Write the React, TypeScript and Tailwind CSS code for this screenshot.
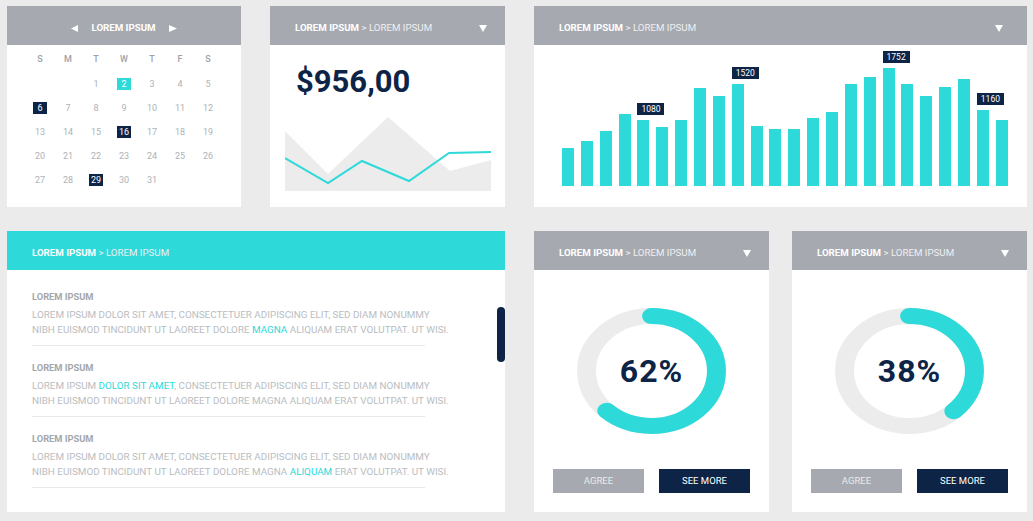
import React from 'react';

const FONT = { fontFamily: 'Roboto, "Open Sans", sans-serif' };

const DownArrow = () => (
  <svg width="8" height="7" viewBox="0 0 8 7">
    <polygon points="0,0 8,0 4,7" fill="#ffffff" />
  </svg>
);

const CardHeader: React.FC<{ teal?: boolean; arrow?: boolean; right?: string }> = ({ teal = false, arrow = true, right = 'pr-[18px]' }) => (
  <div className={`h-[39px] flex items-center justify-between pt-[5px] pl-[25px] ${right} ${teal ? 'bg-[#2dd9d9]' : 'bg-[#a6aab0]'}`}>
    <div className="text-[9.7px] leading-none whitespace-nowrap">
      <span className="font-bold text-white">LOREM IPSUM</span>
      <span className="text-[#eef0f2]"> &gt; LOREM IPSUM</span>
    </div>
    {arrow && <DownArrow />}
  </div>
);

const highlights: Record<number, string> = {
  2: 'bg-[#2dd9d9] text-white',
  6: 'bg-[#0d2447] text-white',
  16: 'bg-[#0d2447] text-white',
  29: 'bg-[#0d2447] text-white',
};

const Calendar = () => {
  const cells: (number | null)[] = [null, null, ...Array.from({ length: 31 }, (_, i) => i + 1)];
  return (
    <div className="w-[234px] h-[201px] bg-white">
      <div className="h-[39px] bg-[#a6aab0] flex items-center justify-center pt-[5px] gap-[13px]">
        <svg width="7" height="7" viewBox="0 0 7 7">
          <polygon points="7,0 7,7 0,3.5" fill="#ffffff" />
        </svg>
        <span className="text-[9.7px] leading-none font-bold text-white">LOREM IPSUM</span>
        <svg width="8" height="7" viewBox="0 0 8 7">
          <polygon points="0,0 0,7 8,3.5" fill="#ffffff" />
        </svg>
      </div>
      <div className="w-[196px] mx-auto pt-[3px] grid grid-cols-7">
        {['S', 'M', 'T', 'W', 'T', 'F', 'S'].map((d, i) => (
          <div key={i} className="h-[24px] flex items-center justify-center text-[9px] font-medium text-[#9ea2a7]">
            {d}
          </div>
        ))}
        {cells.map((d, i) => (
          <div key={i} className="h-[24px] flex items-center justify-center">
            {d !== null && (
              <span
                className={`w-[14px] h-[12px] flex items-center justify-center text-[9px] leading-none ${
                  highlights[d] ?? 'text-[#aeb2b6]'
                }`}
              >
                {d}
              </span>
            )}
          </div>
        ))}
      </div>
    </div>
  );
};

const PriceCard = () => (
  <div className="w-[235px] h-[201px] bg-white flex flex-col">
    <CardHeader />
    <div className="pl-[26px] pt-[21px] text-[31px] leading-none font-bold text-[#0d2447]">$956,00</div>
    <svg className="ml-[15px] mt-[20px]" width="206" height="75" viewBox="0 0 206 75">
      <polygon points="0,14 43,57 103,0 165,54 206,43 206,74 0,74" fill="#ececec" />
      <polyline points="0,41 43,66 77,44 124,64 164,36 206,35" fill="none" stroke="#2dd9d9" strokeWidth="2" />
    </svg>
  </div>
);

const bars = [38, 45, 55, 72, 66, 59, 66, 98, 90, 102, 60, 57, 57, 68, 74, 102, 109, 118, 102, 90, 99, 107, 76, 66];
const labels: Record<number, string> = { 4: '1080', 9: '1520', 17: '1752', 22: '1160' };

const BarCard = () => (
  <div className="w-[493px] h-[201px] bg-white flex flex-col">
    <CardHeader right="pr-[24px]" />
    <div className="flex-1 flex items-end gap-[6.87px] pl-[28px] pb-[21px]">
      {bars.map((h, i) => (
        <div key={i} className="relative w-[12px] bg-[#2dd9d9]" style={{ height: h }}>
          {labels[i] && (
            <div className="absolute bottom-full left-0 mb-[5px] w-[27px] h-[12px] bg-[#0d2447] text-white text-[8.5px] leading-none flex items-center justify-center">
              {labels[i]}
            </div>
          )}
        </div>
      ))}
    </div>
  </div>
);

const Block: React.FC<{ children: React.ReactNode }> = ({ children }) => (
  <div className="mb-[16px]">
    <div className="h-[12px] leading-[12px] text-[9.3px] font-bold text-[#a3a7ab]">LOREM IPSUM</div>
    <div className="mt-[4px] text-[9.85px] leading-[15px] text-[#b9bdc1] whitespace-nowrap">{children}</div>
    <div className="mt-[8px] w-[393px] h-px bg-[#e9e9e9]" />
  </div>
);

const TextCard = () => (
  <div className="w-[498px] h-[281px] bg-white flex flex-col">
    <CardHeader teal arrow={false} />
    <div className="relative flex-1 pl-[25px] pt-[21px]">
      <Block>
        LOREM IPSUM DOLOR SIT AMET, CONSECTETUER ADIPISCING ELIT, SED DIAM NONUMMY
        <br />
        NIBH EUISMOD TINCIDUNT UT LAOREET DOLORE <span className="text-[#2dd9d9]">MAGNA</span> ALIQUAM ERAT VOLUTPAT. UT WISI.
      </Block>
      <Block>
        LOREM IPSUM <span className="text-[#2dd9d9]">DOLOR SIT AMET</span>, CONSECTETUER ADIPISCING ELIT, SED DIAM NONUMMY
        <br />
        NIBH EUISMOD TINCIDUNT UT LAOREET DOLORE MAGNA ALIQUAM ERAT VOLUTPAT. UT WISI.
      </Block>
      <Block>
        LOREM IPSUM DOLOR SIT AMET, CONSECTETUER ADIPISCING ELIT, SED DIAM NONUMMY
        <br />
        NIBH EUISMOD TINCIDUNT UT LAOREET DOLORE MAGNA <span className="text-[#2dd9d9]">ALIQUAM</span> ERAT VOLUTPAT. UT WISI.
      </Block>
      <div className="absolute right-0 top-[37px] w-[8px] h-[55px] rounded-full bg-[#0d2447]" />
    </div>
  </div>
);

const DonutCard: React.FC<{ value: number }> = ({ value }) => {
  const r = 43.6;
  const c = 2 * Math.PI * r;
  return (
    <div className="w-[235px] h-[281px] bg-white flex flex-col">
      <CardHeader />
      <div className="flex flex-col items-center pt-[38px]">
        <div className="relative w-[149px] h-[126px]">
          <svg width="149" height="126" viewBox="0 0 100 100" preserveAspectRatio="none">
            <circle cx="50" cy="50" r={r} fill="none" stroke="#ececec" strokeWidth="12.7" />
            <circle
              cx="50"
              cy="50"
              r={r}
              fill="none"
              stroke="#2dd9d9"
              strokeWidth="12.7"
              strokeLinecap="round"
              strokeDasharray={`${(c * value) / 100} ${c}`}
              transform="rotate(-90 50 50)"
            />
          </svg>
          <div className="absolute inset-0 flex items-center justify-center text-[32px] font-bold text-[#0d2447] tracking-[1px]">
            {value}%
          </div>
        </div>
        <div className="mt-[35px] flex gap-[15px]">
          <button className="w-[91px] h-[24px] bg-[#a6aab0] text-[9.5px] text-[#e9ebed]">AGREE</button>
          <button className="w-[91px] h-[24px] bg-[#0d2447] text-[9.5px] text-white">SEE MORE</button>
        </div>
      </div>
    </div>
  );
};

export default function App() {
  return (
    <div className="w-[1033px] h-[521px] bg-[#ebebeb] pt-[6px] pl-[7px] flex flex-col gap-[24px] overflow-hidden" style={FONT}>
      <div className="flex">
        <Calendar />
        <div className="ml-[29px]">
          <PriceCard />
        </div>
        <div className="ml-[29px]">
          <BarCard />
        </div>
      </div>
      <div className="flex">
        <TextCard />
        <div className="ml-[29px]">
          <DonutCard value={62} />
        </div>
        <div className="ml-[23px]">
          <DonutCard value={38} />
        </div>
      </div>
    </div>
  );
}
